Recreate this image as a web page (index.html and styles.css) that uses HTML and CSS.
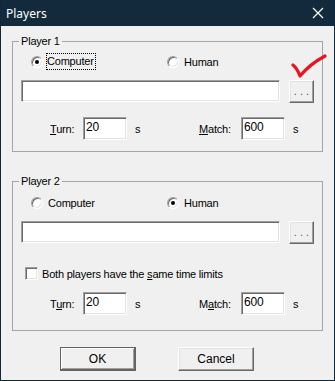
FILE: index.html
```html
<!DOCTYPE html>
<html lang="en">
<head>
  <meta charset="UTF-8">
  <meta name="viewport" content="width=device-width, initial-scale=1.0">
  <title>Players</title>
  <link rel="stylesheet" href="styles.css">
</head>
<body>
  <div class="window">
    <div class="titlebar">
      <span class="title">Players</span>
      <svg class="close" width="12" height="12" viewBox="0 0 12 12">
        <path d="M1 1 L11 11 M11 1 L1 11" stroke="#fff" stroke-width="1.2" fill="none"/>
      </svg>
    </div>

    <div class="content">
      <fieldset class="group">
        <legend>Player 1</legend>
        <div class="group-body">
          <div class="radios">
            <label class="radio first"><span class="dot checked"></span><span class="focus">Computer</span></label>
            <label class="radio"><span class="dot"></span><span>Human</span></label>
          </div>
          <div class="path-row">
            <div class="textbox"></div>
            <button class="browse purple">. . .</button>
          </div>
          <div class="time-row">
            <span class="lbl turn"><u>T</u>urn:</span>
            <div class="field">20</div>
            <span class="unit">s</span>
            <span class="lbl match"><u>M</u>atch:</span>
            <div class="field">600</div>
            <span class="unit">s</span>
          </div>
        </div>
      </fieldset>

      <fieldset class="group second">
        <legend>Player 2</legend>
        <div class="group-body">
          <div class="radios low">
            <label class="radio first"><span class="dot"></span><span>Computer</span></label>
            <label class="radio"><span class="dot checked"></span><span>Human</span></label>
          </div>
          <div class="path-row">
            <div class="textbox"></div>
            <button class="browse">. . .</button>
          </div>
          <label class="check-row"><span class="box"></span><span>Both players have the <u>s</u>ame time limits</span></label>
          <div class="time-row tight">
            <span class="lbl turn">T<u>u</u>rn:</span>
            <div class="field">20</div>
            <span class="unit">s</span>
            <span class="lbl match">M<u>a</u>tch:</span>
            <div class="field">600</div>
            <span class="unit">s</span>
          </div>
        </div>
      </fieldset>

      <div class="buttons">
        <button class="btn default">OK</button>
        <button class="btn">Cancel</button>
      </div>
    </div>

    <!-- red tick drawn over the dialog -->
    <svg class="tick" width="40" height="30" viewBox="0 0 40 30">
      <path d="M3 11 Q7 14 10 22 Q20 10 35 2" stroke="#ea1320" stroke-width="3.2" fill="none" stroke-linecap="round" stroke-linejoin="round"/>
    </svg>
  </div>
</body>
</html>
```

FILE: styles.css
```css
body {
  margin: 0;
  font-family: "Liberation Sans", Arial, sans-serif;
  font-size: 11px;
  letter-spacing: -0.2px;
  color: #000;
}

.window {
  position: relative;
  width: 335px;
  height: 381px;
  box-sizing: border-box;
  background-color: #f0f0f0;
  border: 1px solid #10283a;
  border-top: none;
  overflow: hidden;
}

.titlebar {
  height: 26px;
  background-color: #122a3c;
  display: flex;
  align-items: center;
  justify-content: space-between;
  padding: 0 10px 0 5px;
}

.title {
  color: #fff;
  font-family: "Noto Sans", sans-serif;
  font-size: 12px;
  letter-spacing: 0;
  margin-top: 1px;
}

.content {
  padding: 8px 11px 0 11px;
}

.group {
  margin: 0;
  padding: 0;
  border: 1px solid #a5a5a5;
}

.group legend {
  margin-left: 6px;
  padding: 0 2px;
  line-height: 14px;
}

.group.second {
  margin-top: 22px;
}

.group-body {
  padding: 6px 8px 11px 8px;
}

.second .group-body {
  padding-bottom: 15px;
}

.radios {
  display: flex;
  height: 15px;
  align-items: center;
}

.radios.low {
  margin-top: 1px;
}

.radio {
  display: flex;
  align-items: center;
}

.radio.first {
  width: 136px;
  margin-left: 10px;
}

.dot {
  width: 12px;
  height: 12px;
  box-sizing: border-box;
  border-radius: 50%;
  border: 1px solid;
  border-color: #a0a0a0 #fff #fff #a0a0a0;
  box-shadow: inset 1px 1px 0 #696969, inset -1px -1px 0 #e3e3e3;
  background-color: #fff;
  margin-right: 5px;
  position: relative;
}

.dot.checked::after {
  content: "";
  position: absolute;
  left: 3px;
  top: 3px;
  width: 4px;
  height: 4px;
  border-radius: 50%;
  background-color: #000;
}

.focus {
  outline: 1px dotted #000;
  outline-offset: 0;
  padding: 1px 1px 2px 0;
  margin-left: -1px;
}

.path-row {
  display: flex;
  margin-top: 11px;
}

.textbox {
  width: 259px;
  height: 22px;
  box-sizing: border-box;
  background-color: #fff;
  border: 1px solid;
  border-color: #a0a0a0 #fff #fff #a0a0a0;
  box-shadow: inset 1px 1px 0 #696969, inset -1px -1px 0 #e3e3e3;
}

.browse {
  width: 25px;
  height: 23px;
  margin-left: 9px;
  padding: 0 0 5px 0;
  font-family: "Liberation Sans", Arial, sans-serif;
  font-size: 11px;
  color: #555;
  background-color: #f0f0f0;
  border: 1px solid;
  border-color: #fff #696969 #696969 #fff;
  box-shadow: inset -1px -1px 0 #a0a0a0, inset 1px 1px 0 #e3e3e3;
  display: flex;
  align-items: flex-end;
  justify-content: center;
}

.browse.purple {
  color: #7a1f6e;
}

.time-row {
  display: flex;
  align-items: center;
  margin-top: 14px;
}

.time-row.tight {
  margin-top: 12px;
}

.lbl.turn {
  margin-left: 29px;
  width: 33px;
}

.lbl.match {
  margin-left: 54px;
  width: 42px;
}

.field {
  width: 44px;
  height: 23px;
  box-sizing: border-box;
  background-color: #fff;
  border: 1px solid;
  border-color: #a0a0a0 #fff #fff #a0a0a0;
  box-shadow: inset 1px 1px 0 #696969, inset -1px -1px 0 #e3e3e3;
  padding: 2px 0 0 2px;
  font-size: 12px;
}

.unit {
  margin-left: 8px;
  width: 10px;
}

.check-row {
  display: flex;
  align-items: center;
  margin-top: 23px;
  margin-left: 4px;
}

.box {
  width: 13px;
  height: 13px;
  box-sizing: border-box;
  background-color: #fff;
  border: 1px solid;
  border-color: #a0a0a0 #fff #fff #a0a0a0;
  box-shadow: inset 1px 1px 0 #696969, inset -1px -1px 0 #e3e3e3;
  margin-right: 4px;
}

.buttons {
  display: flex;
  margin-top: 16px;
  padding-left: 48px;
  gap: 42px;
}

.btn {
  width: 76px;
  height: 24px;
  font-family: "Liberation Sans", Arial, sans-serif;
  font-size: 12px;
  color: #000;
  background-color: #f0f0f0;
  border: 1px solid;
  border-color: #fff #696969 #696969 #fff;
  box-shadow: inset -1px -1px 0 #a0a0a0, inset 1px 1px 0 #e3e3e3;
}

.btn.default {
  border: 1px solid #646464;
  border-right-width: 2px;
  border-bottom-width: 2px;
  box-shadow: inset 1px 1px 0 #fff, inset -1px -1px 0 #a0a0a0;
}

.tick {
  position: absolute;
  left: 289px;
  top: 54px;
}
```
